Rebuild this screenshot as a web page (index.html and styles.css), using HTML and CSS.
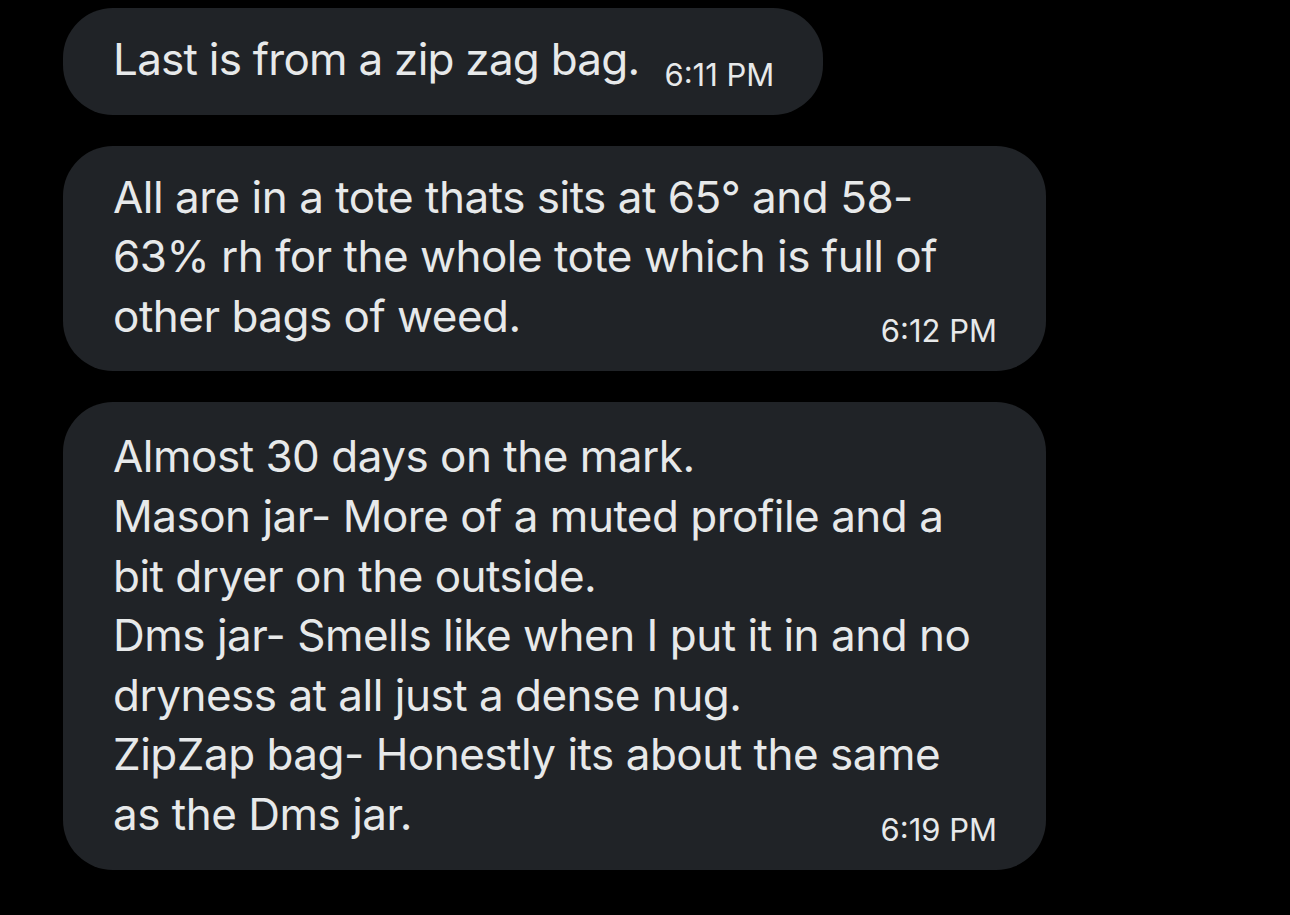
FILE: index.html
```html
<!DOCTYPE html>
<html lang="en">
<head>
<meta charset="utf-8">
<title>Messages</title>
<link rel="stylesheet" href="styles.css">
</head>
<body>
<main class="thread">
  <div class="bubble bubble-fit">
    <p class="text">Last is from a zip zag bag.</p>
    <span class="time">6:11 PM</span>
  </div>
  <div class="bubble bubble-wide">
    <p class="text">All are in a tote thats sits at 65° and 58-<br>63% rh for the whole tote which is full of<br>other bags of weed.</p>
    <span class="time">6:12 PM</span>
  </div>
  <div class="bubble bubble-wide bubble-tall">
    <p class="text">Almost 30 days on the mark.<br>Mason jar- More of a muted profile and a<br>bit dryer on the outside.<br>Dms jar- Smells like when I put it in and no<br>dryness at all just a dense nug.<br>ZipZap bag- Honestly its about the same<br>as the Dms jar.</p>
    <span class="time">6:19 PM</span>
  </div>
</main>
</body>
</html>
```

FILE: styles.css
```css
html, body {
  margin: 0;
  padding: 0;
  background: #000;
}

body {
  width: 1290px;
  height: 915px;
  overflow: hidden;
  font-family: Inter, "Noto Sans", sans-serif;
  color: #e7e9ea;
}

.thread {
  display: flex;
  flex-direction: column;
  align-items: flex-start;
  gap: 31px;
  padding: 8px 0 0 63px;
}

.bubble {
  background: #202327;
  border-radius: 50px;
  padding: 22px 49px 25px 50px;
  box-sizing: border-box;
}

.bubble-fit {
  display: flex;
  align-items: flex-end;
  width: fit-content;
  gap: 25px;
}

.bubble-fit .text {
  letter-spacing: -0.75px;
}

.bubble-wide {
  display: grid;
  grid-template-columns: 1fr;
  width: 983px;
}

.bubble-wide .text,
.bubble-wide .time {
  grid-area: 1 / 1;
}

.bubble-wide .time {
  justify-self: end;
  align-self: end;
}

.bubble-tall {
  padding-top: 25px;
}

.text {
  margin: 0;
  font-size: 44px;
  line-height: 59.6px;
  letter-spacing: -0.5px;
  white-space: nowrap;
}

.time {
  font-size: 31px;
  line-height: 1;
  white-space: nowrap;
}
```
